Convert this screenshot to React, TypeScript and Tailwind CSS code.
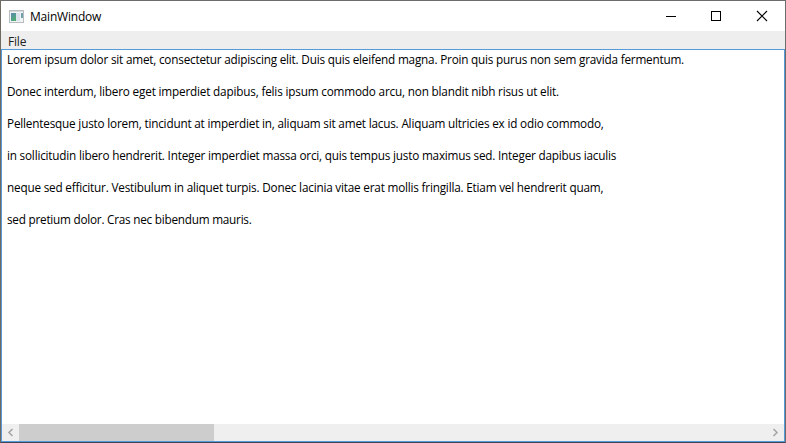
const lines = [
  { text: "Lorem ipsum dolor sit amet, consectetur adipiscing elit. Duis quis eleifend magna. Proin quis purus non sem gravida fermentum.", spacing: "tracking-[-0.204px]" },
  { text: "Donec interdum, libero eget imperdiet dapibus, felis ipsum commodo arcu, non blandit nibh risus ut elit.", spacing: "tracking-[-0.184px]" },
  { text: "Pellentesque justo lorem, tincidunt at imperdiet in, aliquam sit amet lacus. Aliquam ultricies ex id odio commodo,", spacing: "tracking-[-0.19px]" },
  { text: "in sollicitudin libero hendrerit. Integer imperdiet massa orci, quis tempus justo maximus sed. Integer dapibus iaculis", spacing: "tracking-[-0.204px]" },
  { text: "neque sed efficitur. Vestibulum in aliquet turpis. Donec lacinia vitae erat mollis fringilla. Etiam vel hendrerit quam,", spacing: "tracking-[-0.202px]" },
  { text: "sed pretium dolor. Cras nec bibendum mauris.", spacing: "tracking-[-0.236px]" },
];

function WindowIcon() {
  return (
    <svg width="15" height="13" viewBox="0 0 15 13" shapeRendering="crispEdges">
      <defs>
        <linearGradient id="pane" x1="0" y1="0" x2="0.6" y2="1">
          <stop offset="0" stopColor="#5b86b5" />
          <stop offset="1" stopColor="#4fae72" />
        </linearGradient>
      </defs>
      <path fill="#b9bdc0" d="M0 0h15v13H0z" />
      <path fill="#d5d9dc" d="M1 1h13v1H1z" />
      <path fill="#f1f3f4" d="M1 2h13v10H1z" />
      <path fill="url(#pane)" d="M2 3h5v8H2z" />
      <path fill="#dbe4ec" d="M7 3h4v8H7z" />
      <path fill="#6fa0ae" d="M12 3h2v5h-2z" />
    </svg>
  );
}

export default function App() {
  return (
    <div className="flex h-[443px] w-[786px] flex-col overflow-hidden border border-[#6c6c6c] border-b-[#3c4656] border-l-[#70695f] bg-white font-['Open_Sans',sans-serif] text-[11.75px] text-black">
      <header className="flex h-[30px] shrink-0 items-center pl-2">
        <WindowIcon />
        <span className="ml-[6px] pt-px text-[12px] leading-4 tracking-[-0.2px]">MainWindow</span>
        <svg className="ml-auto" width="138" height="29" viewBox="0 0 138 29" fill="none" stroke="#000" shapeRendering="crispEdges">
          <path d="M19 14.500h10M64.500 9.500h9v9h-9z" />
          <path d="m110 9 10 10m0-10-10 10" shapeRendering="auto" strokeWidth="1.100" />
        </svg>
      </header>
      <nav className="h-[18px] shrink-0 bg-[#eee] pl-[7px] text-[12px] leading-[21px] tracking-[-0.2px] text-[#222]">File</nav>
      <main className="flex min-h-0 flex-1 flex-col border border-[#559bd9] bg-white">
        <div className="flex min-h-0 flex-1 flex-col gap-4 overflow-hidden pl-[5px] pt-px">
          {lines.map((line) => (
            <p key={line.text} className="h-4 shrink-0 whitespace-nowrap leading-4">
              <span className={line.spacing}>{line.text}</span>
            </p>
          ))}
        </div>
        <div className="flex h-[17px] shrink-0 items-center bg-[#efefef]">
          <svg width="17" height="17" viewBox="0 0 17 17" fill="none" stroke="#a6a6a6" strokeWidth="1.600">
            <path d="m10.500 5-3.500 3.500 3.500 3.500" />
          </svg>
          <div className="h-full w-[195px] bg-[#cdcdcd]" />
          <svg className="ml-auto" width="17" height="17" viewBox="0 0 17 17" fill="none" stroke="#a6a6a6" strokeWidth="1.600">
            <path d="m6.500 5 3.500 3.500-3.500 3.500" />
          </svg>
        </div>
      </main>
    </div>
  );
}
